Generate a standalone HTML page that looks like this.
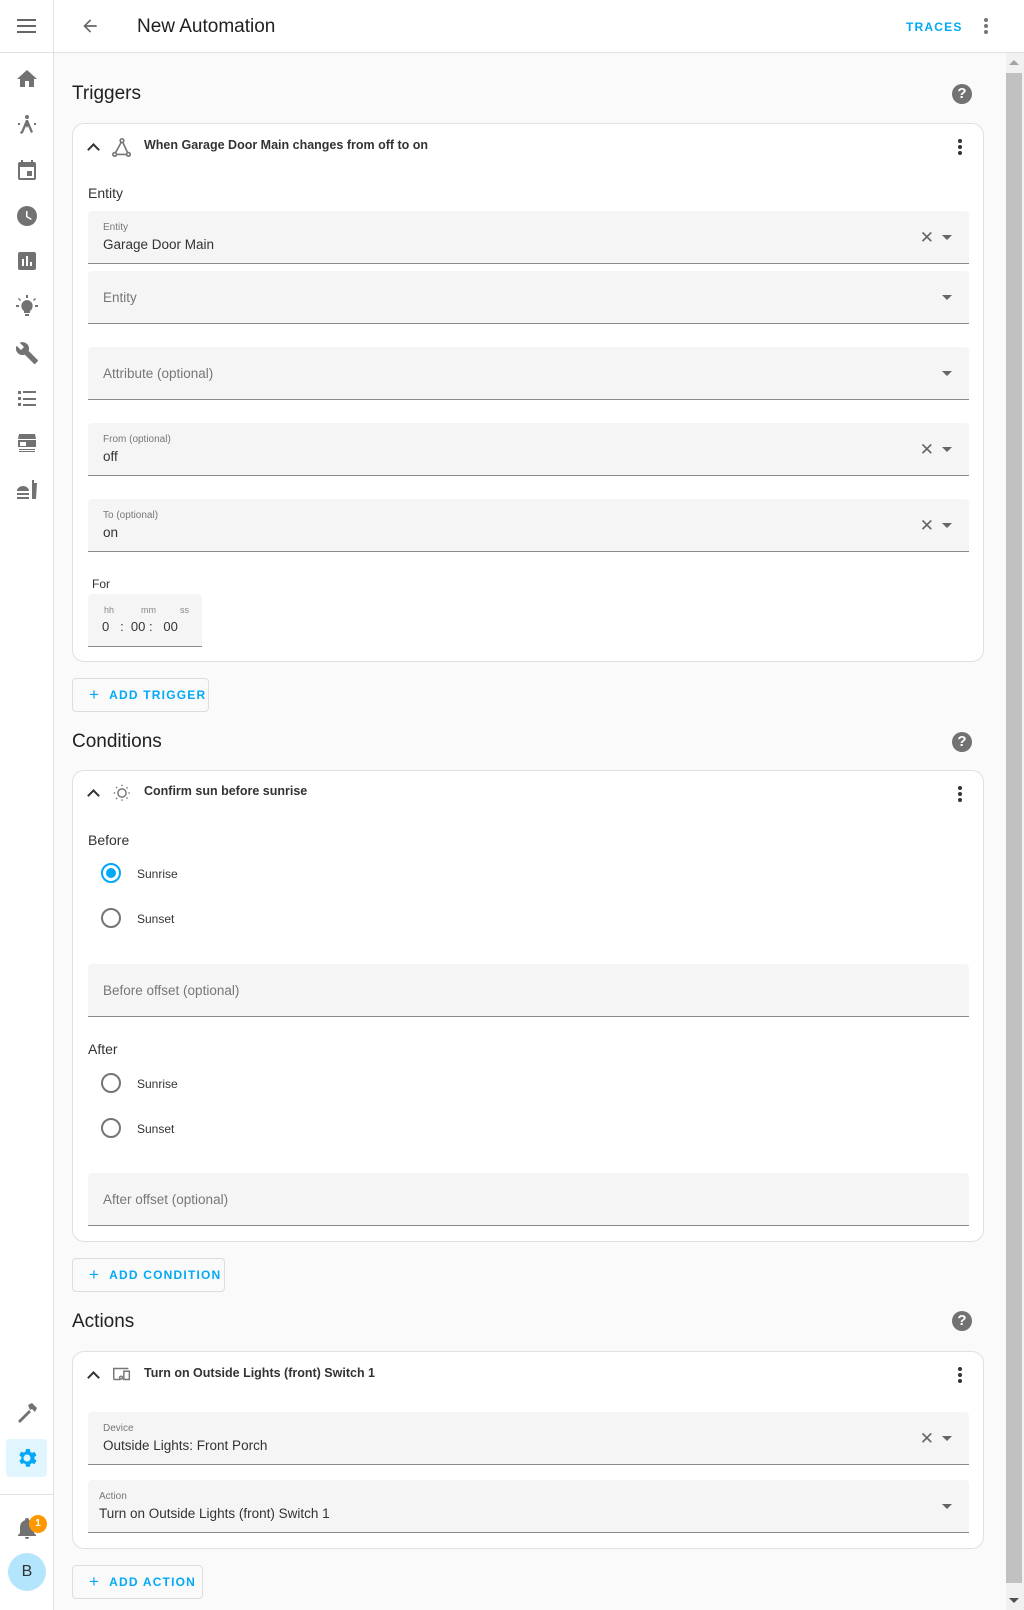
<!DOCTYPE html>
<html><head><meta charset="utf-8"><style>
*{box-sizing:border-box;margin:0;padding:0}
body{width:1024px;height:1610px;overflow:hidden;background:#fafafa;font-family:"Liberation Sans",sans-serif;color:#212121;position:relative}
.abs{position:absolute}
.side{left:0;top:0;width:54px;height:1610px;background:#fff;border-right:1px solid #e0e0e0}
.hdr{left:54px;top:0;width:970px;height:53px;background:#fff;border-bottom:1px solid #e0e0e0}
.ic{position:absolute;left:15px;width:24px;height:24px;fill:#727272}
.h2{font-size:19px;color:#212121;left:72px}
.card{left:72px;width:912px;background:#fff;border:1px solid #e0e0e0;border-radius:12px}
.fld{position:absolute;left:88px;width:881px;background:#f5f5f5;border-bottom:1px solid #8a8a8a;border-radius:4px 4px 0 0}
.fld .sl{position:absolute;left:15px;top:11px;font-size:10px;color:#777}
.fld .v{position:absolute;left:15px;top:26px;font-size:13.5px;color:#333}
.fld .ph{position:absolute;left:15px;top:19px;font-size:13.5px;color:#777}
.tri{position:absolute;right:17px;top:24px;width:0;height:0;border-left:5px solid transparent;border-right:5px solid transparent;border-top:5px solid #666}
.x{position:absolute;right:35px;top:17px;font-size:17px;color:#666;line-height:20px}
.chev{position:absolute;left:14px;top:13px;width:9px;height:9px;border-left:2.5px solid #333;border-top:2.5px solid #333;transform:rotate(45deg)}
.ttl{position:absolute;left:71px;top:14px;font-size:12.5px;font-weight:bold;color:#333}
.kb{position:absolute;right:21px;top:12px;width:4px}
.kb i{display:block;width:4px;height:4px;border-radius:2px;background:#333;margin-bottom:2px}
.help{width:20px;height:20px;border-radius:10px;background:#727272;color:#fff;font-weight:bold;font-size:15px;text-align:center;line-height:20px;left:952px}
.btn{left:72px;height:34px;border:1px solid #ddd;border-radius:4px;background:#fafafa;color:#03a9f4;font-size:12px;font-weight:bold;letter-spacing:1.2px;padding-left:16px;white-space:nowrap;display:flex;align-items:center}
.btn b{font-size:17px;margin-right:9px;font-weight:normal}
.lbl{font-size:14px;color:#333;left:88px}
.rad{position:absolute;left:101px;width:20px;height:20px;border-radius:10px;border:2px solid #757575}
.rl{position:absolute;left:137px;font-size:12px;color:#333}
</style></head><body>
<div class="abs side">
  <div style="position:absolute;left:17px;top:19px;width:19px"><div style="height:2px;background:#666;margin-bottom:4px"></div><div style="height:2px;background:#666;margin-bottom:4px"></div><div style="height:2px;background:#666"></div></div>
  <div style="position:absolute;left:0;top:52px;width:54px;border-top:1px solid #e0e0e0"></div>
  <svg class="ic" style="top:67px" viewBox="0 0 24 24"><path d="M10 20v-6h4v6h5v-8h3L12 3 2 12h3v8z"/></svg>
  <svg class="ic" style="top:113px" viewBox="0 0 24 24"><path d="M12 2a2 2 0 110 4 2 2 0 010-4zM11 7h2l5 12-2 1-3-7-1 2-1-2-3 7-2-1zM3 10h2v2H3zm16 0h2v2h-2zM6 18l2 1-1 2-2-1z"/></svg>
  <svg class="ic" style="top:158px" viewBox="0 0 24 24"><path d="M19 4h-1V2h-2v2H8V2H6v2H5a2 2 0 00-2 2v14a2 2 0 002 2h14a2 2 0 002-2V6a2 2 0 00-2-2zm0 16H5V9h14zM12 13h5v5h-5z"/></svg>
  <svg class="ic" style="top:204px" viewBox="0 0 24 24"><path d="M12 2a10 10 0 100 20 10 10 0 000-20zm4 14l-5-3V7h1.5v5.2l4.3 2.5z"/></svg>
  <svg class="ic" style="top:249px" viewBox="0 0 24 24"><path d="M19 3H5a2 2 0 00-2 2v14a2 2 0 002 2h14a2 2 0 002-2V5a2 2 0 00-2-2zM9 17H7v-7h2zm4 0h-2V7h2zm4 0h-2v-4h2z"/></svg>
  <svg class="ic" style="top:294px" viewBox="0 0 24 24"><path d="M12 6a6 6 0 00-3 11v2h6v-2a6 6 0 00-3-11zM10 20h4v2h-4zM1 11h3v2H1zm19 0h3v2h-3zM11 1h2v3h-2zM4 4l2 2-1 1-2-2zm16 0l1 1-2 2-1-1z"/></svg>
  <svg class="ic" style="top:341px" viewBox="0 0 24 24"><path d="M22.7 19l-9.1-9.1c.9-2.3.4-5-1.5-6.9-2-2-5-2.4-7.4-1.3L9 6 6 9 1.6 4.7C.4 7.1.9 10.1 2.9 12.1c1.9 1.9 4.6 2.4 6.9 1.5l9.1 9.1c.4.4 1 .4 1.4 0l2.3-2.3c.5-.4.5-1.1.1-1.4z"/></svg>
  <svg class="ic" style="top:386px" viewBox="0 0 24 24"><path d="M3 5h3v3H3zm5 0h13v2H8zM3 11h3v3H3zm5 1h13v2H8zM3 17h3v3H3zm5 1h13v2H8z"/></svg>
  <svg class="ic" style="top:431px" viewBox="0 0 24 24"><path d="M4 3h16l1 5H3zM3 9h18v7H3zm2 2v4h6v-4zM4 18h16v1H4zm0 2h16v1H4z"/></svg>
  <svg class="ic" style="top:478px" viewBox="0 0 24 24"><path d="M2 13a6 5 0 0112 0zM2 15h12v2H2zm0 4h12v2H2zM17 2h2v3h3l-1 16h-4z"/></svg>
  <svg class="ic" style="top:1401px" viewBox="0 0 24 24"><path d="M3 20l11-11 2 2-11 11zM13 4l4-2 5 5-2 4-3-3-2 1z"/></svg>
  <div style="position:absolute;left:6px;top:1439px;width:41px;height:38px;background:#e1f5fe;border-radius:4px"></div>
  <svg class="ic" style="top:1446px;fill:#03a9f4" viewBox="0 0 24 24"><path d="M12 15.5A3.5 3.5 0 1112 8.5a3.5 3.5 0 010 7zm7.4-2.5a7.8 7.8 0 000-2l2.1-1.6-2-3.5-2.5 1a7.6 7.6 0 00-1.7-1L14.9 3h-4l-.4 2.6a7.6 7.6 0 00-1.7 1l-2.5-1-2 3.5L6.4 11a7.8 7.8 0 000 2l-2.1 1.6 2 3.5 2.5-1c.5.4 1.1.7 1.700 1l.4 2.6h4l.4-2.6c.6-.3 1.2-.6 1.7-1l2.5 1 2-3.5z"/></svg>
  <div style="position:absolute;left:0;top:1494px;width:54px;border-top:1px solid #e0e0e0"></div>
  <svg class="ic" style="top:1516px" viewBox="0 0 24 24"><path d="M10 21h4a2 2 0 01-4 0zm11-2v1H3v-1l2-2v-6c0-3.1 2-5.8 5-6.7V4a2 2 0 014 0v.3c3 .9 5 3.6 5 6.7v6z"/></svg>
  <div style="position:absolute;left:29px;top:1515px;width:18px;height:18px;border-radius:9px;background:#ff9800;color:#fff;font-size:10px;font-weight:bold;text-align:center;line-height:18px">1</div>
  <div style="position:absolute;left:8px;top:1553px;width:38px;height:38px;border-radius:19px;background:#b3e5fc;color:#333;font-size:16px;text-align:center;line-height:38px">B</div>
</div>
<div class="abs hdr">
  <svg style="position:absolute;left:26px;top:16px" width="20" height="20" viewBox="0 0 24 24"><path fill="#666" d="M20 11H7.8l5.6-5.6L12 4l-8 8 8 8 1.4-1.4L7.8 13H20z"/></svg>
  <div style="position:absolute;left:83px;top:16px;font-size:19px;color:#212121">New Automation</div>
  <div style="position:absolute;left:852px;top:20px;font-size:12px;font-weight:bold;color:#03a9f4;letter-spacing:1.2px">TRACES</div>
  <div style="position:absolute;left:930px;top:18px;width:4px"><div style="width:4px;height:4px;border-radius:2px;background:#777;margin-bottom:2px"></div><div style="width:4px;height:4px;border-radius:2px;background:#777;margin-bottom:2px"></div><div style="width:4px;height:4px;border-radius:2px;background:#777"></div></div>
</div>
<div class="abs" style="left:1006px;top:53px;width:18px;height:1557px;background:#f1f1f1"></div>
<div class="abs" style="left:1006px;top:73px;width:16px;height:1510px;background:#c1c1c1"></div>
<div class="abs" style="left:1009px;top:60px;border-left:5px solid transparent;border-right:5px solid transparent;border-bottom:5px solid #a3a3a3"></div>
<div class="abs" style="left:1009px;top:1598px;border-left:5px solid transparent;border-right:5px solid transparent;border-top:5px solid #505050"></div>

<div class="abs h2" style="top:83px">Triggers</div>
<div class="abs help" style="top:84px">?</div>
<div class="abs card" style="top:123px;height:539px">
  <div class="chev" style="left:16px;top:21px"></div>
  <svg style="position:absolute;left:38px;top:13px" width="22" height="22" viewBox="0 0 24 24" fill="none" stroke="#777" stroke-width="1.8"><circle cx="12" cy="4" r="2"/><circle cx="4" cy="19" r="2"/><circle cx="19" cy="19" r="2"/><path d="M11 6L5 17M13 6l5 11M6 19h11"/></svg>
  <div class="ttl">When Garage Door Main changes from off to on</div>
  <div class="kb" style="top:15px"><i></i><i></i><i></i></div>
</div>
<div class="abs lbl" style="top:185px">Entity</div>
<div class="fld" style="top:211px;height:53px"><div class="sl">Entity</div><div class="v">Garage Door Main</div><div class="x">✕</div><div class="tri"></div></div>
<div class="fld" style="top:271px;height:53px"><div class="ph">Entity</div><div class="tri"></div></div>
<div class="fld" style="top:347px;height:53px"><div class="ph">Attribute (optional)</div><div class="tri"></div></div>
<div class="fld" style="top:423px;height:53px"><div class="sl">From (optional)</div><div class="v">off</div><div class="x">✕</div><div class="tri"></div></div>
<div class="fld" style="top:499px;height:53px"><div class="sl">To (optional)</div><div class="v">on</div><div class="x">✕</div><div class="tri"></div></div>
<div class="abs" style="left:92px;top:577px;font-size:12px;color:#333">For</div>
<div class="fld" style="top:594px;height:53px;width:114px">
  <div style="position:absolute;left:16px;top:11px;font-size:9px;color:#888">hh</div>
  <div style="position:absolute;left:53px;top:11px;font-size:9px;color:#888">mm</div>
  <div style="position:absolute;left:92px;top:11px;font-size:9px;color:#888">ss</div>
  <div style="position:absolute;left:14px;top:25px;font-size:13px;color:#333;white-space:pre">0   :  00 :   00</div>
</div>
<div class="abs btn" style="top:678px;width:137px"><b>+</b>ADD TRIGGER</div>

<div class="abs h2" style="top:731px">Conditions</div>
<div class="abs help" style="top:732px">?</div>
<div class="abs card" style="top:770px;height:472px">
  <div class="chev" style="left:16px;top:20px"></div>
  <svg style="position:absolute;left:38px;top:11px" width="22" height="22" viewBox="0 0 24 24" fill="none" stroke="#777" stroke-width="1.6"><circle cx="12" cy="12" r="4.5"/><path d="M12 3v2M12 19v2M3 12h2M19 12h2M5.5 5.5l1.4 1.4M17 17l1.4 1.4M5.5 18.5l1.4-1.4M17 7l1.4-1.4" stroke-dasharray="1.5 1"/></svg>
  <div class="ttl" style="top:13px">Confirm sun before sunrise</div>
  <div class="kb" style="top:15px"><i></i><i></i><i></i></div>
</div>
<div class="abs lbl" style="top:832px">Before</div>
<div class="rad" style="top:863px;border-color:#03a9f4"><div style="margin:3px;width:10px;height:10px;border-radius:5px;background:#03a9f4"></div></div><div class="rl" style="top:867px">Sunrise</div>
<div class="rad" style="top:908px"></div><div class="rl" style="top:912px">Sunset</div>
<div class="fld" style="top:964px;height:53px"><div class="ph">Before offset (optional)</div></div>
<div class="abs lbl" style="top:1041px">After</div>
<div class="rad" style="top:1073px"></div><div class="rl" style="top:1077px">Sunrise</div>
<div class="rad" style="top:1118px"></div><div class="rl" style="top:1122px">Sunset</div>
<div class="fld" style="top:1173px;height:53px"><div class="ph">After offset (optional)</div></div>
<div class="abs btn" style="top:1258px;width:153px"><b>+</b>ADD CONDITION</div>

<div class="abs h2" style="top:1311px">Actions</div>
<div class="abs help" style="top:1311px">?</div>
<div class="abs card" style="top:1351px;height:198px">
  <div class="chev" style="left:16px;top:21px"></div>
  <svg style="position:absolute;left:38px;top:11px" width="22" height="22" viewBox="0 0 24 24" fill="none" stroke="#777" stroke-width="1.6"><path d="M3 18V6h16M3 18h7M14 9h6v9h-6z"/><circle cx="11" cy="16" r="1.6"/></svg>
  <div class="ttl" style="top:14px">Turn on Outside Lights (front) Switch 1</div>
  <div class="kb" style="top:15px"><i></i><i></i><i></i></div>
</div>
<div class="fld" style="top:1412px;height:53px"><div class="sl">Device</div><div class="v">Outside Lights: Front Porch</div><div class="x">✕</div><div class="tri"></div></div>
<div class="fld" style="top:1480px;height:53px"><div class="sl" style="left:11px">Action</div><div class="v" style="left:11px">Turn on Outside Lights (front) Switch 1</div><div class="tri"></div></div>
<div class="abs btn" style="top:1565px;width:131px"><b>+</b>ADD ACTION</div>
</body></html>
